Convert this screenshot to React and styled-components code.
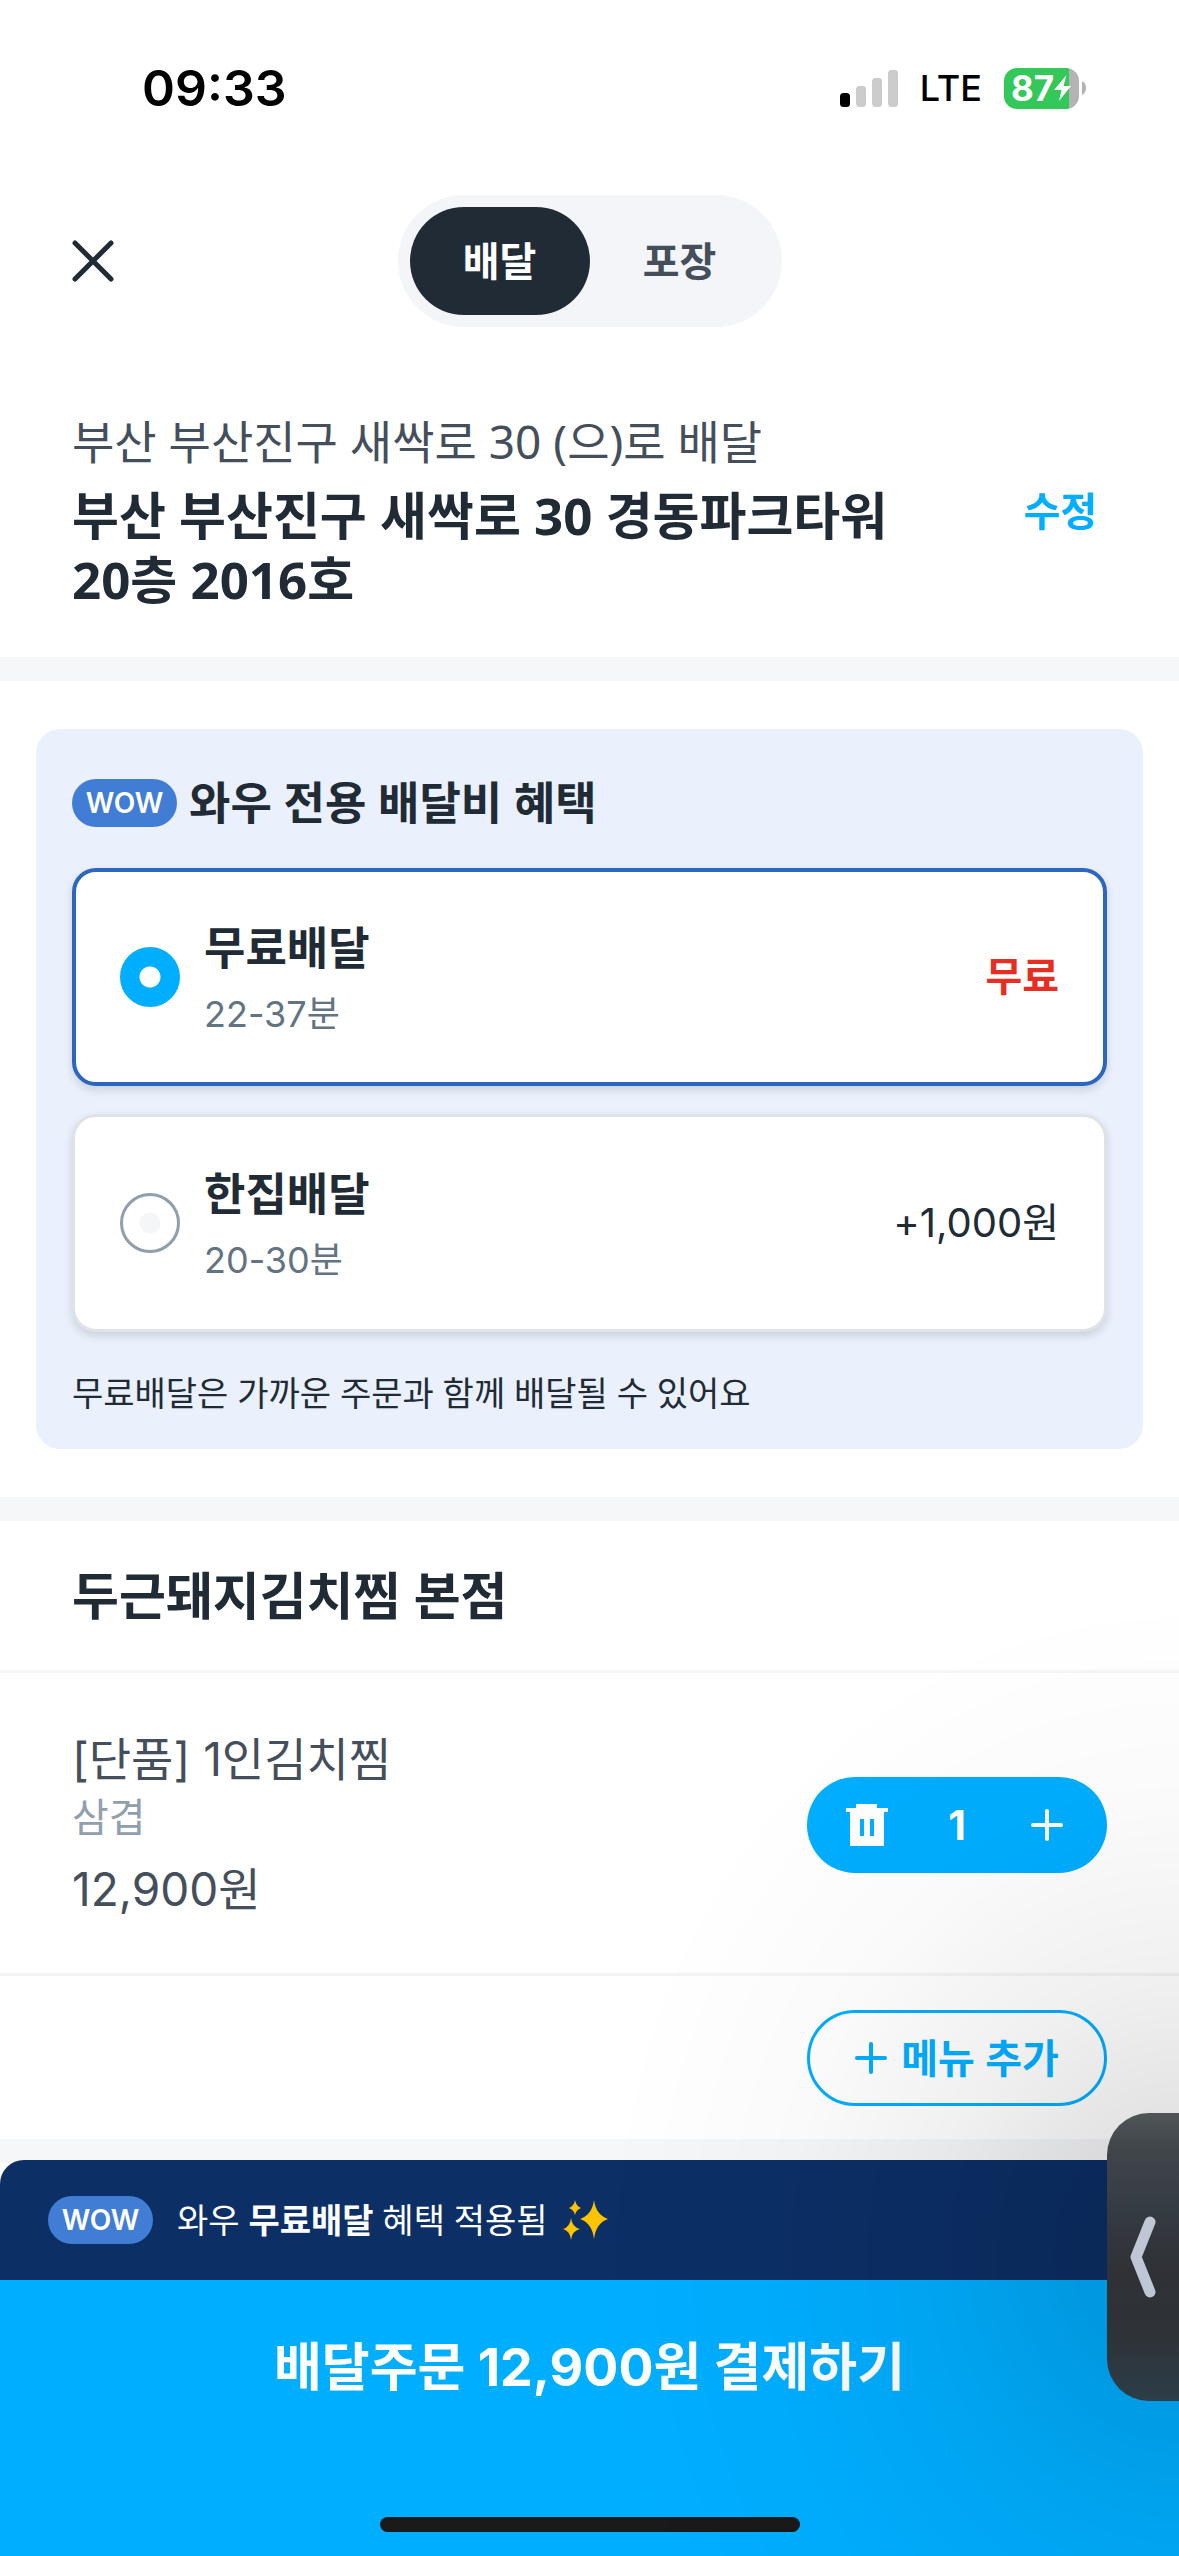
import { useState } from 'react';
import styled, { createGlobalStyle, css } from 'styled-components';

const GlobalStyle = createGlobalStyle`
    * {
        box-sizing: border-box;
    }

    body {
        margin: 0;
        background: #fff;
        color: #212b36;
        font-family: "Noto Sans", "Noto Sans CJK KR", sans-serif;
    }

    button {
        margin: 0;
        padding: 0;
        border: 0;
        background: none;
        font: inherit;
        color: inherit;
        cursor: pointer;
    }

    h1, h2, p {
        margin: 0;
    }
`;

const Page = styled.div`
    display: flex;
    flex-direction: column;
    min-height: 100vh;
`;

const StatusBar = styled.div`
    display: flex;
    align-items: center;
    justify-content: space-between;
    height: 176px;
    padding: 0 93px 0 142px;
    font-family: Inter, sans-serif;
    color: #000;
`;

const Clock = styled.time`
    font-size: 50px;
    font-weight: 600;
`;

const StatusIcons = styled.div`
    display: flex;
    align-items: center;
    gap: 22px;
    font-size: 36px;
    font-weight: 500;
`;

const BatteryBox = styled.div`
    display: flex;
    align-items: center;
    gap: 3px;
`;

const Battery = styled.div`
    display: flex;
    align-items: center;
    width: 75px;
    height: 41px;
    padding-left: 7px;
    border-radius: 13px;
    background: linear-gradient(to right, #34c759 87%, #b3b3b3 87%);
    color: #fff;
    font-size: 35px;
    font-weight: 700;

    svg {
        flex: none;
    }
`;

const Header = styled.header`
    display: grid;
    grid-template-columns: 1fr auto 1fr;
    align-items: center;
    padding: 19px 72px 0;
`;

const CloseButton = styled.button`
    display: flex;
    justify-self: start;
`;

const Tabs = styled.div`
    display: flex;
    padding: 12px;
    border-radius: 66px;
    background: #f4f5f8;
`;

const Tab = styled.button`
    width: 180px;
    height: 108px;
    border-radius: 54px;
    font-size: 40px;
    font-weight: 700;
    line-height: 60px;
    color: ${({ $active }) => ($active ? '#fff' : '#454f5b')};
    background: ${({ $active }) => ($active ? '#212b36' : 'transparent')};
`;

const Address = styled.section`
    display: flex;
    align-items: center;
    justify-content: space-between;
    padding: 84px 82px 46px 72px;
`;

const AddressText = styled.div`
    display: grid;
    gap: 12px;
    max-width: 860px;
    word-break: keep-all;
`;

const AddressHint = styled.p`
    font-size: 46px;
    line-height: 60px;
    color: #454f5b;
`;

const AddressTitle = styled.h1`
    font-size: 51px;
    line-height: 64px;
    font-weight: 700;
`;

const EditButton = styled.button`
    font-size: 40px;
    line-height: 60px;
    font-weight: 700;
    color: #00aeff;
`;

const Band = styled.div`
    height: 24px;
    background: #f6f7f9;
`;

const Benefit = styled.section`
    padding: 48px 36px;
`;

const BenefitCard = styled.div`
    padding: 36px 36px 29px;
    border-radius: 24px;
    background: #eaf1fc;
`;

const BenefitTitle = styled.h2`
    display: flex;
    align-items: center;
    gap: 12px;
    margin-bottom: 27px;
    font-size: 45px;
    line-height: 76px;
    font-weight: 700;
`;

const WowBadge = styled.span`
    display: inline-flex;
    align-items: center;
    justify-content: center;
    width: 105px;
    height: 48px;
    border-radius: 24px;
    background: #417dd4;
    color: #fff;
    font-family: Inter, sans-serif;
    font-size: 28px;
    font-weight: 600;
`;

const Options = styled.div`
    display: grid;
    gap: 28px;
`;

const Option = styled.label`
    display: flex;
    align-items: center;
    gap: 24px;
    min-height: 218px;
    padding: 0 45px;
    border: 3px solid #dfe3e7;
    border-radius: 24px;
    background: #fff;
    box-shadow: 0 4px 8px rgba(33, 43, 54, 0.16);
    cursor: pointer;

    ${({ $checked }) => $checked && css`
        padding: 0 44px;
        border: 4px solid #2c66bd;
    `}
`;

const Radio = styled.input`
    appearance: none;
    flex: none;
    width: 60px;
    height: 60px;
    margin: 0;
    border: 3px solid #919eab;
    border-radius: 50%;
    background: radial-gradient(circle, #f4f6f8 10px, #fff 11px);

    &:checked {
        border-color: #00aeff;
        background: radial-gradient(circle, #fff 10px, #00aeff 11px);
    }
`;

const OptionText = styled.span`
    display: grid;
    flex: 1;
`;

const OptionName = styled.span`
    font-size: 45px;
    line-height: 74px;
    font-weight: 700;
`;

const OptionTime = styled.span`
    font-family: Inter, "Noto Sans CJK KR", sans-serif;
    font-size: 36px;
    line-height: 58px;
    color: #637381;
`;

const OptionPrice = styled.span`
    font-family: Inter, "Noto Sans CJK KR", sans-serif;
    font-size: 40px;
    line-height: 58px;
    font-weight: ${({ $free }) => ($free ? 700 : 400)};
    color: ${({ $free }) => ($free ? '#e62e22' : 'inherit')};
`;

const Note = styled.p`
    margin-top: 34px;
    font-size: 34px;
    line-height: 54px;
`;

const StoreName = styled.h2`
    padding: 0 72px;
    border-bottom: 3px solid #f4f6f8;
    font-size: 51px;
    line-height: 149px;
    font-weight: 700;
`;

const Item = styled.section`
    display: flex;
    align-items: center;
    justify-content: space-between;
    padding: 58px 72px 54px;
    border-bottom: 3px solid #f4f4f5;
    color: #454f5b;
`;

const ItemName = styled.p`
    font-family: Inter, "Noto Sans CJK KR", sans-serif;
    font-size: 46px;
    line-height: 56px;
`;

const ItemOption = styled.p`
    font-size: 40px;
    line-height: 60px;
    color: #919eab;
`;

const ItemPrice = styled.p`
    margin-top: 12px;
    font-family: Inter, "Noto Sans CJK KR", sans-serif;
    font-size: 46px;
    line-height: 60px;
`;

const Stepper = styled.div`
    display: grid;
    grid-template-columns: 1fr 60px 1fr;
    align-items: center;
    width: 300px;
    height: 96px;
    border-radius: 48px;
    background: #00aeff;
    color: #fff;
`;

const StepButton = styled.button`
    display: flex;
    align-items: center;
    justify-content: center;
    height: 96px;
`;

const Count = styled.output`
    text-align: center;
    font-family: Inter, sans-serif;
    font-size: 41px;
    font-weight: 700;
`;

const AddRow = styled.div`
    display: flex;
    justify-content: flex-end;
    padding: 34px 72px 33px;
`;

const AddButton = styled.button`
    display: flex;
    align-items: center;
    justify-content: center;
    gap: 14px;
    width: 300px;
    height: 96px;
    border: 3px solid #00aeff;
    border-radius: 48px;
    font-size: 40px;
    line-height: 60px;
    font-weight: 700;
    color: #00aeff;
`;

const Footer = styled.footer`
    display: flex;
    flex-direction: column;
    flex: 1;
    margin-top: -3px;
`;

const WowBar = styled.div`
    display: flex;
    align-items: center;
    gap: 24px;
    height: 120px;
    padding: 0 48px;
    border-radius: 24px 24px 0 0;
    background: #0c2f66;
    color: #fff;
`;

const WowText = styled.p`
    display: flex;
    align-items: center;
    gap: 15px;
    font-size: 34px;
    line-height: 54px;

    strong {
        font-weight: 700;
    }
`;

const PayButton = styled.button`
    display: flex;
    flex-direction: column;
    align-items: center;
    justify-content: space-between;
    flex: 1;
    padding: 50px 0 24px;
    background: #00aeff;
    color: #fff;
    font-family: Inter, "Noto Sans CJK KR", sans-serif;
    font-size: 52px;
    line-height: 76px;
    font-weight: 700;
`;

const HomeIndicator = styled.span`
    width: 420px;
    height: 15px;
    border-radius: 8px;
    background: #1a1a1a;
`;

/* soft shade that spreads from the drawer handle */
const HandleShade = styled.div`
    position: fixed;
    right: 0;
    bottom: 0;
    width: 600px;
    height: 960px;
    max-width: 100%;
    background: radial-gradient(
        580px 660px at 100% 661px,
        rgba(0, 0, 0, 0.14),
        rgba(0, 0, 0, 0.12) 16%,
        rgba(0, 0, 0, 0.06) 42%,
        rgba(0, 0, 0, 0.02) 68%,
        rgba(0, 0, 0, 0)
    );
    pointer-events: none;
`;

/* drawer handle that floats over the page's right edge */
const SideHandle = styled.button`
    position: fixed;
    right: 0;
    bottom: 155px;
    display: flex;
    align-items: center;
    justify-content: center;
    width: 72px;
    height: 288px;
    border-radius: 42px 0 0 42px;
    background: linear-gradient(#505558, #41464b 12%, #353c43 32%, #2f3136 55%, #2e3338 78%, #2c3e48);
`;

const OPTIONS = [
    { id: 'free', name: '무료배달', time: '22-37분', price: '무료', free: true },
    { id: 'single', name: '한집배달', time: '20-30분', price: '+1,000원', free: false },
];

function SignalIcon() {
    return (
        <svg width="58" height="37" viewBox="0 0 58 37" aria-hidden="true">
            <rect x="0" y="23" width="10" height="14" rx="3.5" fill="#000" />
            <rect x="16" y="16" width="10" height="21" rx="3.5" fill="#ccc" />
            <rect x="32" y="8" width="10" height="29" rx="3.5" fill="#ccc" />
            <rect x="48" y="0" width="10" height="37" rx="3.5" fill="#ccc" />
        </svg>
    );
}

function BoltIcon() {
    return (
        <svg width="17" height="26" viewBox="0 0 17 26" aria-hidden="true">
            <path d="M12.500 0L0 15H7.500L5 26L17 11H9.500Z" fill="#fff" />
        </svg>
    );
}

function PlusIcon() {
    return (
        <svg width="32" height="32" viewBox="0 0 32 32" aria-hidden="true">
            <path d="M16 2V30M2 16H30" stroke="currentColor" strokeWidth="4" strokeLinecap="round" />
        </svg>
    );
}

function TrashIcon() {
    return (
        <svg width="42" height="42" viewBox="0 0 42 42" aria-hidden="true">
            <path
                fillRule="evenodd"
                fill="currentColor"
                d="M10 0H31V4H42V8H38V41Q38 42 37 42H5Q4 42 4 41V8H0V4H10ZM14 15V32H18V15ZM24 15V32H28V15Z"
            />
        </svg>
    );
}

function SparkleIcon() {
    return (
        <svg width="46" height="42" viewBox="0 0 46 42" aria-hidden="true">
            <g fill="#ffc400">
                <path d="M31 1Q33 16 45 20Q33 24 31 40Q29 24 17 20Q29 16 31 1Z" />
                <path d="M12 1Q13 7 18 9Q13 11 12 16Q11 11 6 9Q11 7 12 1Z" />
                <path d="M8 19Q9 28 17 30Q9 32 8 41Q7 32 0 30Q7 28 8 19Z" />
            </g>
        </svg>
    );
}

function App() {
    const [tab, setTab] = useState('배달');
    const [option, setOption] = useState('free');
    const [count, setCount] = useState(1);

    return (
        <Page>
            <GlobalStyle />
            <StatusBar>
                <Clock>09:33</Clock>
                <StatusIcons>
                    <SignalIcon />
                    <span>LTE</span>
                    <BatteryBox>
                        <Battery>
                            87
                            <BoltIcon />
                        </Battery>
                        <svg width="4" height="14" viewBox="0 0 4 14" aria-hidden="true">
                            <path d="M0 0Q4 2 4 7Q4 12 0 14Z" fill="#b3b3b3" />
                        </svg>
                    </BatteryBox>
                </StatusIcons>
            </StatusBar>

            <Header>
                <CloseButton type="button" aria-label="닫기">
                    <svg width="42" height="42" viewBox="0 0 42 42" aria-hidden="true">
                        <path d="M3 3L39 39M39 3L3 39" stroke="#212b36" strokeWidth="5" strokeLinecap="round" />
                    </svg>
                </CloseButton>
                <Tabs>
                    {['배달', '포장'].map((name) => (
                        <Tab key={name} type="button" $active={tab === name} onClick={() => setTab(name)}>
                            {name}
                        </Tab>
                    ))}
                </Tabs>
            </Header>

            <Address>
                <AddressText>
                    <AddressHint>부산 부산진구 새싹로 30 (으)로 배달</AddressHint>
                    <AddressTitle>부산 부산진구 새싹로 30 경동파크타워 20층 2016호</AddressTitle>
                </AddressText>
                <EditButton type="button">수정</EditButton>
            </Address>

            <Band />

            <Benefit>
                <BenefitCard>
                    <BenefitTitle>
                        <WowBadge>WOW</WowBadge>
                        와우 전용 배달비 혜택
                    </BenefitTitle>
                    <Options>
                        {OPTIONS.map(({ id, name, time, price, free }) => (
                            <Option key={id} $checked={option === id}>
                                <Radio
                                    type="radio"
                                    name="delivery"
                                    value={id}
                                    checked={option === id}
                                    onChange={() => setOption(id)}
                                />
                                <OptionText>
                                    <OptionName>{name}</OptionName>
                                    <OptionTime>{time}</OptionTime>
                                </OptionText>
                                <OptionPrice $free={free}>{price}</OptionPrice>
                            </Option>
                        ))}
                    </Options>
                    <Note>무료배달은 가까운 주문과 함께 배달될 수 있어요</Note>
                </BenefitCard>
            </Benefit>

            <Band />

            <StoreName>두근돼지김치찜 본점</StoreName>
            <Item>
                <div>
                    <ItemName>[단품] 1인김치찜</ItemName>
                    <ItemOption>삼겹</ItemOption>
                    <ItemPrice>12,900원</ItemPrice>
                </div>
                <Stepper>
                    <StepButton type="button" aria-label="삭제" onClick={() => setCount(Math.max(1, count - 1))}>
                        <TrashIcon />
                    </StepButton>
                    <Count>{count}</Count>
                    <StepButton type="button" aria-label="추가" onClick={() => setCount(count + 1)}>
                        <PlusIcon />
                    </StepButton>
                </Stepper>
            </Item>
            <AddRow>
                <AddButton type="button">
                    <PlusIcon />
                    메뉴 추가
                </AddButton>
            </AddRow>

            <Band />

            <Footer>
                <WowBar>
                    <WowBadge>WOW</WowBadge>
                    <WowText>
                        <span>와우 <strong>무료배달</strong> 혜택 적용됨</span>
                        <SparkleIcon />
                    </WowText>
                </WowBar>
                <PayButton type="button">
                    배달주문 12,900원 결제하기
                    <HomeIndicator />
                </PayButton>
            </Footer>

            <HandleShade />
            <SideHandle type="button" aria-label="열기">
                <svg width="26" height="82" viewBox="0 0 26 82" aria-hidden="true">
                    <path
                        d="M20 6L6 41L20 76"
                        fill="none"
                        stroke="#bfc6d4"
                        strokeWidth="11"
                        strokeLinecap="round"
                        strokeLinejoin="round"
                    />
                </svg>
            </SideHandle>
        </Page>
    );
}

export default App;
